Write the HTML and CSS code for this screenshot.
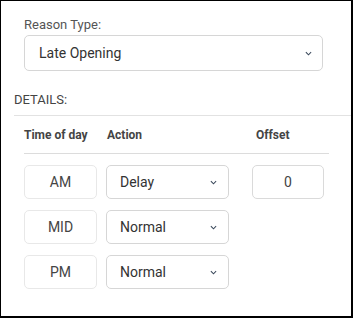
FILE: index.html
```html
<!DOCTYPE html>
<html lang="en">
<head>
  <meta charset="UTF-8" />
  <meta name="viewport" content="width=device-width, initial-scale=1.0" />
  <title>Reason Details</title>
  <link rel="stylesheet" href="styles.css">
</head>
<body>

  <section class="panel">
    <div class="reason">
      <label class="label">Reason Type:</label>
      <div class="select select-wide">
        <span>Late Opening</span>
        <svg class="chevron" viewBox="0 0 8 5" width="8" height="5"><path d="M1 1l3 3 3-3" /></svg>
      </div>
    </div>

    <h2 class="details-title">DETAILS:</h2>

    <div class="grid">
      <div class="grid-head">Time of day</div>
      <div class="grid-head head-action">Action</div>
      <div class="grid-head head-offset">Offset</div>
      <div class="grid-rule"></div>

      <div class="slot">AM</div>
      <div class="select">
        <span>Delay</span>
        <svg class="chevron" viewBox="0 0 8 5" width="8" height="5"><path d="M1 1l3 3 3-3" /></svg>
      </div>
      <div class="offset">0</div>

      <div class="slot">MID</div>
      <div class="select">
        <span>Normal</span>
        <svg class="chevron" viewBox="0 0 8 5" width="8" height="5"><path d="M1 1l3 3 3-3" /></svg>
      </div>
      <div></div>

      <div class="slot">PM</div>
      <div class="select">
        <span>Normal</span>
        <svg class="chevron" viewBox="0 0 8 5" width="8" height="5"><path d="M1 1l3 3 3-3" /></svg>
      </div>
      <div></div>
    </div>
  </section>

</body>
</html>
```

FILE: styles.css
```css
* {
  margin: 0;
  padding: 0;
  box-sizing: border-box;
}
body {
  font-family: Roboto, 'Liberation Sans', sans-serif;
  background: #fff;
  color: #333;
}
.panel {
  width: 353px;
  height: 318px;
  border-style: solid;
  border-color: #000;
  border-width: 1px 2px 2px 1px;
  padding-top: 16px;
}
.reason {
  padding: 0 28px 0 23px;
}
.label {
  display: block;
  font-size: 13px;
  line-height: 16px;
  color: #555;
  margin-bottom: 2px;
}
.select {
  display: flex;
  align-items: center;
  justify-content: space-between;
  height: 34px;
  padding: 0 11px 0 13px;
  border: 1px solid #d6d6d6;
  border-radius: 5px;
  font-size: 14px;
  color: #333;
}
.select-wide {
  height: 36px;
  padding: 0 10px 0 14px;
}
.chevron {
  width: 7px;
  height: 5px;
  fill: none;
  stroke: #3c4a5c;
  stroke-width: 1.2;
}
.details-title {
  font-size: 13px;
  font-weight: 400;
  line-height: 16px;
  color: #444;
  margin: 21px 0 0 13px;
  padding-bottom: 7px;
  border-bottom: 1px solid #e2e2e2;
}
.grid {
  display: grid;
  grid-template-columns: 73px 123px 1fr;
  column-gap: 9px;
  row-gap: 11px;
  width: 305px;
  margin: 10px 0 0 23px;
}
.grid-head {
  font-size: 12px;
  font-weight: 700;
  line-height: 16px;
  color: #444;
  padding-top: 1px;
}
.head-action {
  padding-left: 1px;
}
.head-offset {
  padding-left: 18px;
}
.grid-rule {
  grid-column: 1 / -1;
  border-top: 1px solid #dcdcdc;
  margin-top: -1px;
}
.slot,
.offset {
  display: flex;
  align-items: center;
  justify-content: center;
  height: 34px;
  border: 1px solid #e8e8e8;
  border-radius: 5px;
  font-size: 14px;
  color: #444;
}
.offset {
  width: 72px;
  margin-left: 14px;
  border-color: #dadada;
}
```
